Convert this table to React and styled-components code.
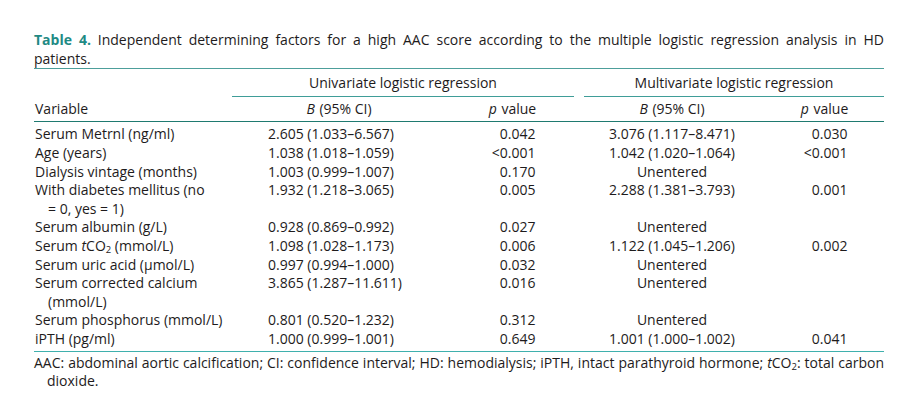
import React from "react";
import styled, { createGlobalStyle } from "styled-components";

const Global = createGlobalStyle`
  html, body { margin: 0; padding: 0; background: #ffffff; }
  body { font-family: "Open Sans", "Noto Sans", sans-serif; color: #1e1b1c; }
`;

const Page = styled.div`
  width: 850px;
  padding: 31px 0 0 34px;
  font-size: 14px;
  line-height: 18.6px;
`;

const Caption = styled.div`
  margin: 0;
`;

const JustLine = styled.div`
  text-align: justify;
  text-align-last: justify;
`;

const Label = styled.span`
  color: #1f8a84;
  font-weight: 700;
`;

const Table = styled.table`
  width: 850px;
  border-collapse: collapse;
  border-spacing: 0;
  table-layout: fixed;
  border-top: 1.5px solid #4d9f9b;
  border-bottom: 1.5px solid #3fb0ad;
  margin-top: 0;
`;

const Col = styled.col`
  width: ${(p) => p.$w}px;
`;

const SpanHead = styled.th`
  font-weight: 400;
  padding: 5px 0 0 0;
  text-align: center;
`;

const SpanText = styled.div`
  border-bottom: 1.5px solid #3f9d98;
  margin: ${(p) => (p.$side === "left" ? "0 5px 0 0" : "0 0 0 5px")};
  padding-bottom: 3px;
`;

const HeadRow = styled.tr`
  border-bottom: 1.5px solid #1f7a70;
`;

const Th = styled.th`
  font-weight: 400;
  padding: 3px 0 3px ${(p) => (p.$align === "left" ? "1px" : "0")};
  text-align: ${(p) => p.$align || "center"};
  vertical-align: bottom;
`;

const Td = styled.td`
  padding: 0 0 0 ${(p) => (p.$align === "left" ? "1px" : "0")};
  text-align: ${(p) => p.$align || "center"};
  vertical-align: top;
  white-space: nowrap;
`;

const FirstRow = styled.tr`
  td { padding-top: 3px; }
`;

const LastRow = styled.tr`
  td { padding-bottom: 2px; }
`;

const Hang = styled.div`
  padding-left: ${(p) => p.$indent || 0}px;
`;

const Block = styled.span`
  display: inline-block;
  width: ${(p) => p.$w}px;
  text-align: ${(p) => p.$align || "left"};
`;

const Footnote = styled.div`
  padding-top: 2px;
`;

const Sub = styled.sub`
  font-size: 9.5px;
  vertical-align: -2px;
  line-height: 0;
`;

const Ital = styled.i`
  margin-right: 1px;
`;

const tco2 = (
  <>
    <i>t</i>CO<Sub>2</Sub>
  </>
);

const rows = [
  { v: ["Serum Metrnl (ng/ml)"], b1: "2.605 (1.033–6.567)", p1: "0.042", b2: "3.076 (1.117–8.471)", p2: "0.030" },
  { v: ["Age (years)"], b1: "1.038 (1.018–1.059)", p1: "<0.001", b2: "1.042 (1.020–1.064)", p2: "<0.001" },
  { v: ["Dialysis vintage (months)"], b1: "1.003 (0.999–1.007)", p1: "0.170", b2: "Unentered", p2: "" },
  { v: ["With diabetes mellitus (no", "= 0, yes = 1)"], b1: "1.932 (1.218–3.065)", p1: "0.005", b2: "2.288 (1.381–3.793)", p2: "0.001" },
  { v: ["Serum albumin (g/L)"], b1: "0.928 (0.869–0.992)", p1: "0.027", b2: "Unentered", p2: "" },
  { v: [<>Serum {tco2} (mmol/L)</>], b1: "1.098 (1.028–1.173)", p1: "0.006", b2: "1.122 (1.045–1.206)", p2: "0.002" },
  { v: ["Serum uric acid (μmol/L)"], b1: "0.997 (0.994–1.000)", p1: "0.032", b2: "Unentered", p2: "" },
  { v: ["Serum corrected calcium", "(mmol/L)"], b1: "3.865 (1.287–11.611)", p1: "0.016", b2: "Unentered", p2: "" },
  { v: ["Serum phosphorus (mmol/L)"], b1: "0.801 (0.520–1.232)", p1: "0.312", b2: "Unentered", p2: "" },
  { v: ["iPTH (pg/ml)"], b1: "1.000 (0.999–1.001)", p1: "0.649", b2: "1.001 (1.000–1.002)", p2: "0.041" },
];

function Row({ r, as: R }) {
  return (
    <R>
      <Td $align="left">
        {r.v.map((line, i) => (
          <Hang key={i} $indent={i > 0 ? 13 : 0}>
            {line}
          </Hang>
        ))}
      </Td>
      <Td>
        <Block $w={142}>{r.b1}</Block>
      </Td>
      <Td>
        <Block $w={46} $align="right">{r.p1}</Block>
      </Td>
      <Td>{r.b2}</Td>
      <Td>
        <Block $w={46} $align="right">{r.p2}</Block>
      </Td>
    </R>
  );
}

export default function App() {
  return (
    <Page>
      <Global />
      <Caption>
        <JustLine>
          <Label>Table 4.</Label> Independent determining factors for a high AAC score according to the multiple
          logistic regression analysis in HD
        </JustLine>
        <div>patients.</div>
      </Caption>
      <Table>
        <colgroup>
          <Col $w={198} />
          <Col $w={214} />
          <Col $w={133} />
          <Col $w={186} />
          <Col $w={119} />
        </colgroup>
        <thead>
          <tr>
            <SpanHead />
            <SpanHead colSpan={2}>
              <SpanText $side="left">Univariate logistic regression</SpanText>
            </SpanHead>
            <SpanHead colSpan={2}>
              <SpanText $side="right">Multivariate logistic regression</SpanText>
            </SpanHead>
          </tr>
          <HeadRow>
            <Th $align="left">Variable</Th>
            <Th>
              <Ital>B</Ital> (95% CI)
            </Th>
            <Th>
              <Ital>p</Ital> value
            </Th>
            <Th>
              <Ital>B</Ital> (95% CI)
            </Th>
            <Th>
              <Ital>p</Ital> value
            </Th>
          </HeadRow>
        </thead>
        <tbody>
          {rows.map((r, i) => (
            <Row
              key={i}
              r={r}
              as={i === 0 ? FirstRow : i === rows.length - 1 ? LastRow : "tr"}
            />
          ))}
        </tbody>
      </Table>
      <Footnote>
        <JustLine>
          AAC: abdominal aortic calcification; CI: confidence interval; HD: hemodialysis; iPTH, intact parathyroid
          hormone; {tco2}: total carbon
        </JustLine>
        <Hang $indent={13}>dioxide.</Hang>
      </Footnote>
    </Page>
  );
}
